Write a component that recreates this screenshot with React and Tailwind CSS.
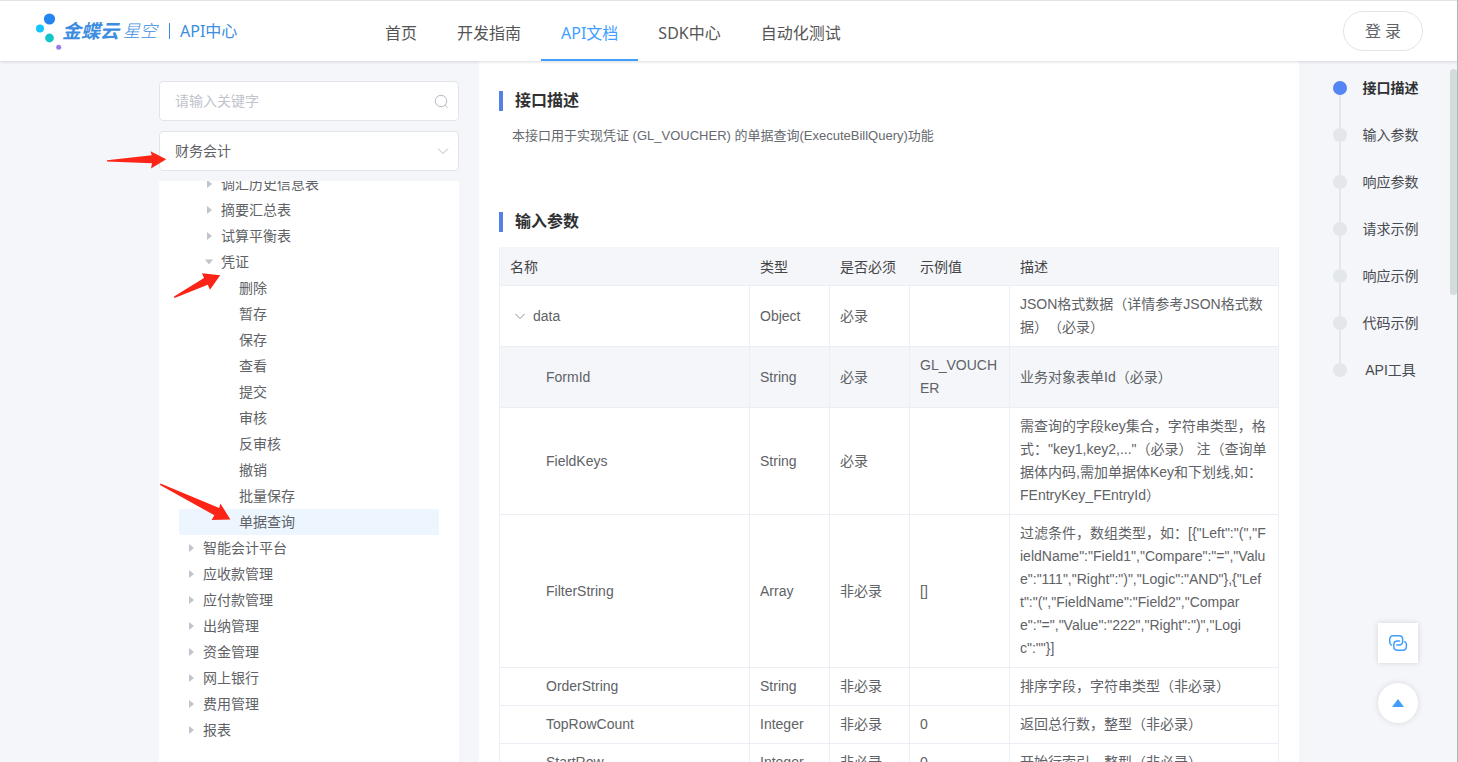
import React from 'react';

const NAV = [
  { label: '首页' },
  { label: '开发指南' },
  { label: 'API文档', active: true },
  { label: 'SDK中心' },
  { label: '自动化测试' },
];

const TREE = [
  { label: '调汇历史信息表', level: 2, caret: 'right' },
  { label: '摘要汇总表', level: 2, caret: 'right' },
  { label: '试算平衡表', level: 2, caret: 'right' },
  { label: '凭证', level: 2, caret: 'down' },
  { label: '删除', level: 3 },
  { label: '暂存', level: 3 },
  { label: '保存', level: 3 },
  { label: '查看', level: 3 },
  { label: '提交', level: 3 },
  { label: '审核', level: 3 },
  { label: '反审核', level: 3 },
  { label: '撤销', level: 3 },
  { label: '批量保存', level: 3 },
  { label: '单据查询', level: 3, selected: true },
  { label: '智能会计平台', level: 1, caret: 'right' },
  { label: '应收款管理', level: 1, caret: 'right' },
  { label: '应付款管理', level: 1, caret: 'right' },
  { label: '出纳管理', level: 1, caret: 'right' },
  { label: '资金管理', level: 1, caret: 'right' },
  { label: '网上银行', level: 1, caret: 'right' },
  { label: '费用管理', level: 1, caret: 'right' },
  { label: '报表', level: 1, caret: 'right' },
];

const INDENT = { 1: 'pl-0', 2: 'pl-[18px]', 3: 'pl-9' };

const ROWS = [
  { name: 'data', type: 'Object', required: '必录', sample: '', desc: 'JSON格式数据（详情参考JSON格式数据）（必录）', parent: true },
  { name: 'FormId', type: 'String', required: '必录', sample: 'GL_VOUCHER', desc: '业务对象表单Id（必录）', hover: true },
  { name: 'FieldKeys', type: 'String', required: '必录', sample: '', desc: '需查询的字段key集合，字符串类型，格式："key1,key2,..."（必录） 注（查询单据体内码,需加单据体Key和下划线,如：FEntryKey_FEntryId）' },
  { name: 'FilterString', type: 'Array', required: '非必录', sample: '[]', desc: '过滤条件，数组类型，如：[{"Left":"(","FieldName":"Field1","Compare":"=","Value":"111","Right":")","Logic":"AND"},{"Left":"(","FieldName":"Field2","Compare":"=","Value":"222","Right":")","Logic":""}]' },
  { name: 'OrderString', type: 'String', required: '非必录', sample: '', desc: '排序字段，字符串类型（非必录）' },
  { name: 'TopRowCount', type: 'Integer', required: '非必录', sample: '0', desc: '返回总行数，整型（非必录）' },
  { name: 'StartRow', type: 'Integer', required: '非必录', sample: '0', desc: '开始行索引，整型（非必录）' },
];

const ANCHORS = ['接口描述', '输入参数', '响应参数', '请求示例', '响应示例', '代码示例', 'API工具'];

function Logo() {
  return (
    <a href="#home" className="flex w-[329px] shrink-0 items-center text-[#3c8ce0]">
      <svg className="h-10 w-[26px] shrink-0" viewBox="0 0 26 40" aria-hidden="true">
        <circle cx="13.5" cy="8" r="5.6" fill="#2585ee" />
        <circle cx="4" cy="17.5" r="4" fill="#12c6fb" />
        <circle cx="13.5" cy="27" r="4.4" fill="#14c4cc" />
        <circle cx="22.7" cy="36.3" r="2.5" fill="#9b78ee" />
      </svg>
      <span className="text-[19px] leading-6 font-bold italic">金蝶云</span>
      <span className="ml-1 text-[17px] leading-6 font-light italic">星空</span>
      <span className="mr-[10px] ml-3 h-4 w-px bg-[#3c8ce0]" />
      <span className="text-base leading-6">API中心</span>
    </a>
  );
}

function Header() {
  return (
    <header className="relative z-10 flex h-[61px] shrink-0 items-stretch border-t border-[#e4e4e4] bg-white pr-[35px] pl-9 font-['Noto_Sans','Noto_Sans_CJK_SC',sans-serif] shadow-[0_1px_3px_rgba(0,0,0,0.14)]">
      <Logo />
      <nav className="flex flex-1">
        {NAV.map((item) => (
          <a
            key={item.label}
            href="#nav"
            className={
              item.active
                ? 'flex items-center border-b-2 border-[#409eff] px-5 pt-[6px] text-base whitespace-nowrap text-[#409eff]'
                : 'flex items-center border-b-2 border-transparent px-5 pt-[6px] text-base whitespace-nowrap text-[#555]'
            }
          >
            {item.label}
          </a>
        ))}
      </nav>
      <button type="button" className="mt-[10px] h-10 w-20 rounded-full border border-[#e2e4e9] bg-white text-base text-[#606266]">
        登 录
      </button>
    </header>
  );
}

function Caret({ direction }) {
  return (
    <svg className="h-3 w-6 shrink-0" viewBox="0 0 24 12" fill="#c0c4cc" aria-hidden="true">
      {direction === 'right' && <path d="M10 2v8L15 6z" />}
      {direction === 'down' && <path d="M8 3.600h8L12 8.400z" />}
    </svg>
  );
}

function Sidebar() {
  return (
    <aside className="flex w-[300px] shrink-0 flex-col gap-[10px] pt-5">
      <div className="flex h-10 shrink-0 items-center rounded-[4px] border border-[#e1e4ea] bg-white pr-[9px] pl-[15px]">
        <input
          type="text"
          aria-label="请输入关键字"
          placeholder="请输入关键字"
          className="min-w-0 flex-1 bg-transparent text-sm outline-none placeholder:text-[#c0c4cc]"
        />
        <svg className="h-[15px] w-[15px]" viewBox="0 0 15 15" fill="none" stroke="#b8bcc5" strokeWidth="1" aria-hidden="true">
          <circle cx="7" cy="7" r="5.7" />
          <path d="M11 11l2.5 2.5" />
        </svg>
      </div>
      <div className="relative h-10 shrink-0">
        <select
          aria-label="模块"
          className="h-full w-full appearance-none rounded-[4px] border border-[#e1e4ea] bg-white pr-8 pl-[15px] text-sm text-[#606266]"
        >
          <option>财务会计</option>
        </select>
        <svg className="pointer-events-none absolute top-[14px] right-[10px] h-3 w-3" viewBox="0 0 12 12" fill="none" stroke="#b8bcc5" strokeWidth="1" aria-hidden="true">
          <path d="M1 3.500L6 8.500l5-5" />
        </svg>
      </div>
      <div className="min-h-0 flex-1 overflow-hidden bg-white px-5">
        <ul className="-mt-[10px]">
          {TREE.map((node) => (
            <li key={node.label} className={node.selected ? 'rounded-[2px] bg-[#edf6ff]' : ''}>
              <button type="button" className={`flex h-[26px] w-full items-center text-left text-sm text-[#606266] ${INDENT[node.level]}`}>
                <Caret direction={node.caret} />
                {node.label}
              </button>
            </li>
          ))}
        </ul>
      </div>
    </aside>
  );
}

function SectionTitle({ children }) {
  return <h2 className="border-l-4 border-[#5580e6] pl-3 text-base leading-5 font-bold text-[#303133]">{children}</h2>;
}

function ParamTable() {
  return (
    <table className="mt-[15px] w-full table-fixed border-separate border-spacing-0 border-t border-l border-[#ebeef5] border-t-[#f4f6fa] text-left text-sm leading-[23px] text-[#606266] [text-spacing-trim:space-all]">
      <colgroup>
        <col className="w-[250px]" />
        <col className="w-20" />
        <col className="w-20" />
        <col className="w-[100px]" />
        <col />
      </colgroup>
      <thead>
        <tr className="bg-[#f4f6fa] text-[#444]">
          {['名称', '类型', '是否必须', '示例值', '描述'].map((title) => (
            <th key={title} className="border-b border-[#ebeef5] px-[10px] pt-2 pb-[6px] font-normal whitespace-nowrap last:border-r">
              {title}
            </th>
          ))}
        </tr>
      </thead>
      <tbody className="break-all">
        {ROWS.map((row) => (
          <tr key={row.name} className={row.hover ? 'bg-[#f4f6fa]' : ''}>
            <td className="border-r border-b border-[#ebeef5] px-[10px] py-[7px]">
              {row.parent ? (
                <button type="button" className="flex items-center gap-[7px]">
                  <svg className="ml-1 h-3 w-3" viewBox="0 0 12 12" fill="none" stroke="#8c8f96" strokeWidth="1" aria-hidden="true">
                    <path d="M1.500 4L6 8.500 10.500 4" />
                  </svg>
                  {row.name}
                </button>
              ) : (
                <span className="pl-9">{row.name}</span>
              )}
            </td>
            <td className="border-r border-b border-[#ebeef5] px-[10px] py-[7px]">{row.type}</td>
            <td className="border-r border-b border-[#ebeef5] px-[10px] py-[7px]">{row.required}</td>
            <td className="border-r border-b border-[#ebeef5] px-[10px] py-[7px]">{row.sample}</td>
            <td className="border-r border-b border-[#ebeef5] px-[10px] py-[7px]">{row.desc}</td>
          </tr>
        ))}
      </tbody>
    </table>
  );
}

function AnchorNav() {
  return (
    <nav className="pt-1 pl-[34px]">
      <ul>
        {ANCHORS.map((label, i) => (
          <li key={label} className="flex h-[47px] gap-[15px]">
            <div className="flex w-[14px] flex-col items-center pt-4">
              <span className={i === 0 ? 'h-[14px] w-[14px] shrink-0 rounded-full bg-[#5584f4]' : 'h-[14px] w-[14px] shrink-0 rounded-full bg-[#e4e7ea]'} />
              {i < ANCHORS.length - 1 && <span className="-mb-4 w-[2px] flex-1 bg-[#e4e7ea]" />}
            </div>
            <a
              href="#section"
              className={
                i === 0
                  ? 'w-[57px] pt-3 text-center text-sm leading-[22px] font-bold whitespace-nowrap text-[#303133]'
                  : 'w-[57px] pt-3 text-center text-sm leading-[22px] whitespace-nowrap text-[#484a4f]'
              }
            >
              {label}
            </a>
          </li>
        ))}
      </ul>
    </nav>
  );
}

function FloatingActions() {
  return (
    <div className="absolute right-10 bottom-[39px] flex flex-col gap-5">
      <button type="button" aria-label="复制链接" className="flex h-10 w-10 items-center justify-center bg-white shadow-[0_0_6px_rgba(0,0,0,0.14)]">
        <svg className="h-5 w-5" viewBox="0 0 20 20" fill="none" stroke="#409eff" strokeWidth="1.5" strokeLinecap="round" aria-hidden="true">
          <path d="M3.400 12.200C2.100 11.400 1.700 10.200 1.700 8.500V6.500C1.700 4 2.900 2.800 5.400 2.800H11C13.500 2.800 14.700 4 14.700 6.500V8.300C14.700 10.800 13.500 12 11 12H8.800" />
          <path d="M16.800 8.600C18 9.300 18.400 10.300 18.400 11.800V13.500C18.400 16 17.200 17.200 14.700 17.200H9.500C7 17.200 5.800 16 5.800 13.500V11.700C5.800 9.200 7 8 9.500 8H11.600" />
        </svg>
      </button>
      <button type="button" aria-label="返回顶部" className="flex h-10 w-10 items-center justify-center rounded-full bg-white shadow-[0_0_6px_rgba(0,0,0,0.12)]">
        <svg className="h-2 w-3" viewBox="0 0 12 8" fill="#409eff" aria-hidden="true">
          <path d="M6 0l6 8H0z" />
        </svg>
      </button>
    </div>
  );
}

function PointerArrows() {
  return (
    <svg className="pointer-events-none absolute top-[140px] -left-[60px] z-20 h-[400px] w-[140px]" viewBox="99 140 140 400" fill="#fb2416" aria-hidden="true">
      <path d="M107 160.300L151.800 155.200l-1.300-4 15.700 8.100-15.200 9.200 1-5.300L107 161.500z" />
      <path d="M174 296.500L204 278l-2-4.800 18.200 2-10.200 14.600-2.200-5L174.500 298z" />
      <path d="M160.500 483.500L219.200 508l1.200-4.500 10 16-18.800.500 2.800-4.700L160 485z" />
    </svg>
  );
}

export default function App() {
  return (
    <div className="relative flex h-screen flex-col overflow-hidden bg-[#f4f6fa] font-['Liberation_Sans','Noto_Sans_CJK_SC',sans-serif]">
      <Header />
      <div className="grid min-h-0 flex-1 grid-cols-[1fr_minmax(0,1140px)_1fr]">
        <div />
        <div className="flex min-h-0 gap-5">
          <Sidebar />
          <main className="min-w-0 flex-1 overflow-hidden bg-white px-5 pt-[30px]">
            <section>
              <SectionTitle>接口描述</SectionTitle>
              <p className="mt-[15px] pl-[13px] text-[13px] leading-5 text-[#66696f]">
                本接口用于实现凭证 (GL_VOUCHER) 的单据查询(ExecuteBillQuery)功能
              </p>
            </section>
            <section className="mt-[66px]">
              <SectionTitle>输入参数</SectionTitle>
              <ParamTable />
            </section>
          </main>
        </div>
        <div className="flex min-h-0 justify-between pr-px">
          <AnchorNav />
          <div className="mt-2 h-[226px] w-[7px] rounded-full bg-[#d5dadb]" />
        </div>
      </div>
      <FloatingActions />
      <div className="pointer-events-none absolute inset-y-0 right-0 z-20 w-px bg-[#a9b9b6]" />
      <div className="pointer-events-none absolute inset-x-0 top-0 mx-auto w-full max-w-[1140px]">
        <div className="absolute top-0 left-0">
          <PointerArrows />
        </div>
      </div>
    </div>
  );
}
